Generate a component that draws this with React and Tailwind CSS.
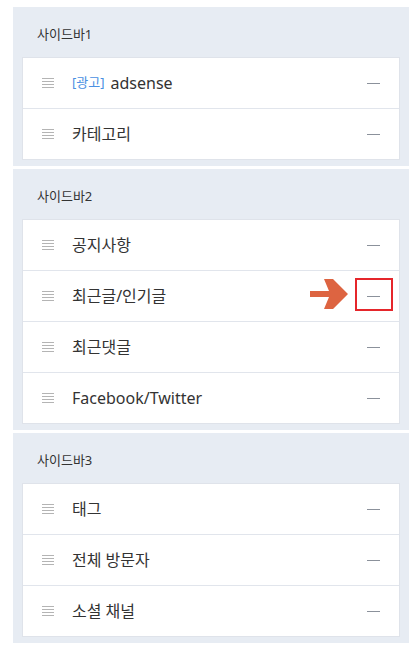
import React from "react";

const panels = [
    {title: "사이드바1", items: [{label: "adsense", tag: "[광고]"}, {label: "카테고리"}]},
    {title: "사이드바2", items: [{label: "공지사항"}, {label: "최근글/인기글", marked: true}, {label: "최근댓글"}, {label: "Facebook/Twitter"}]},
    {title: "사이드바3", items: [{label: "태그"}, {label: "전체 방문자"}, {label: "소셜 채널"}]},
];

const Handle = () => (
    <div className="flex flex-col gap-[2px] w-[12px]">
        <span className="block h-px bg-[#b4b4b4]"/>
        <span className="block h-px bg-[#b4b4b4]"/>
        <span className="block h-px bg-[#b4b4b4]"/>
        <span className="block h-px bg-[#b4b4b4]"/>
    </div>
);

const Row = ({item, last}) => (
    <div className={`relative flex items-center pl-[19px] pr-[19px] ${last ? "h-[50px]" : "h-[51px] border-b border-[#e1e5ec]"}`}>
        <Handle/>
        <div className="ml-[18px] flex-1 flex items-center text-[16px] text-[#333]">
            {item.tag && <span className="text-[13px] text-[#4a90e2] mr-[6px]">{item.tag}</span>}
            <span>{item.label}</span>
        </div>
        <span className="block h-px w-[13px] bg-[#8b919b]"/>
        {item.marked && (
            <>
                <svg className="absolute left-[287px] top-[8px]" width="38" height="30" viewBox="0 0 38 30">
                    <polygon points="0,12 19,12 14,0 23,0 38,15 23,30 14,30 19,18 0,18" fill="#dd6441"/>
                </svg>
                <div className="absolute left-[332px] top-[7px] w-[38px] h-[33px] border-2 border-[#e5262b]"/>
            </>
        )}
    </div>
);

export default function App() {
    return (
        <div className="bg-white min-h-screen pt-[7px] pl-[13px]" style={{fontFamily: '"Noto Sans", "Noto Sans CJK KR", sans-serif'}}>
            <div className="flex flex-col gap-[3px] w-[396px]">
                {panels.map((panel) => (
                    <section key={panel.title} className="bg-[#e7ecf3] px-[9px] pb-[6px]">
                        <div className="h-[50px] flex items-center pt-[6px] pl-[15px] text-[13px] text-[#333]">
                            {panel.title}
                        </div>
                        <div className="bg-white border border-[#dfe3ea]">
                            {panel.items.map((item, i) => (
                                <Row key={item.label} item={item} last={i === panel.items.length - 1}/>
                            ))}
                        </div>
                    </section>
                ))}
            </div>
        </div>
    );
}
